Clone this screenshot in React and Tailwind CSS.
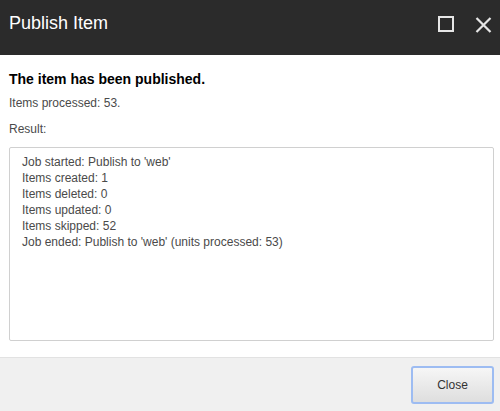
import React from 'react';

const lines = [
  "Job started: Publish to 'web'",
  'Items created: 1',
  'Items deleted: 0',
  'Items updated: 0',
  'Items skipped: 52',
  "Job ended: Publish to 'web' (units processed: 53)",
];

const App = () => {
  return (
    <div className="w-[500px] h-[411px] flex flex-col bg-white font-['Liberation_Sans',Arial,sans-serif] overflow-hidden">
      {/* title bar */}
      <div className="h-[55px] shrink-0 bg-[#2b2b2b] flex items-start justify-between pl-[9px] pr-[8px]">
        <div className="pt-[12px] text-[18px] leading-[22px] text-white">Publish Item</div>
        <div className="flex items-start gap-[21px] pt-[16px]">
          <svg width="16" height="16" viewBox="0 0 16 16" className="block">
            <rect x="1" y="1" width="14" height="14" fill="none" stroke="#e6e6e6" strokeWidth="2" />
          </svg>
          <svg width="17" height="16" viewBox="0 0 17 16" className="block mt-[1px]">
            <path d="M1.5 1 L15.5 15 M15.5 1 L1.5 15" stroke="#e6e6e6" strokeWidth="2.2" fill="none" />
          </svg>
        </div>
      </div>

      {/* body */}
      <div className="flex-1 flex flex-col pl-[9px] pr-[6px] pt-[14px] pb-[16px]">
        <div className="text-[14px] leading-[20px] font-bold text-black">The item has been published.</div>
        <div className="mt-[6px] text-[12px] leading-[16px] text-[#4a4a4a]">Items processed: 53.</div>
        <div className="mt-[10px] text-[12px] leading-[16px] text-[#4a4a4a]">Result:</div>
        <div className="mt-[10px] flex-1 border border-[#d0d0d0] rounded-[2px] pl-[12px] pt-[6px] text-[12px] leading-[16px] text-[#4a4a4a]">
          {lines.map((line) => (
            <div key={line}>{line}</div>
          ))}
        </div>
      </div>

      {/* footer */}
      <div className="h-[54px] shrink-0 bg-[#f0f0f0] border-t border-[#e2e2e2] flex justify-end items-start pt-[8px] pr-[6px]">
        <button className="w-[83px] h-[38px] rounded-[3px] border-2 border-[#9dbcf2] bg-gradient-to-b from-[#f6f6f6] to-[#dedede] text-[12px] text-[#333]">
          Close
        </button>
      </div>
    </div>
  );
};

export default App;
